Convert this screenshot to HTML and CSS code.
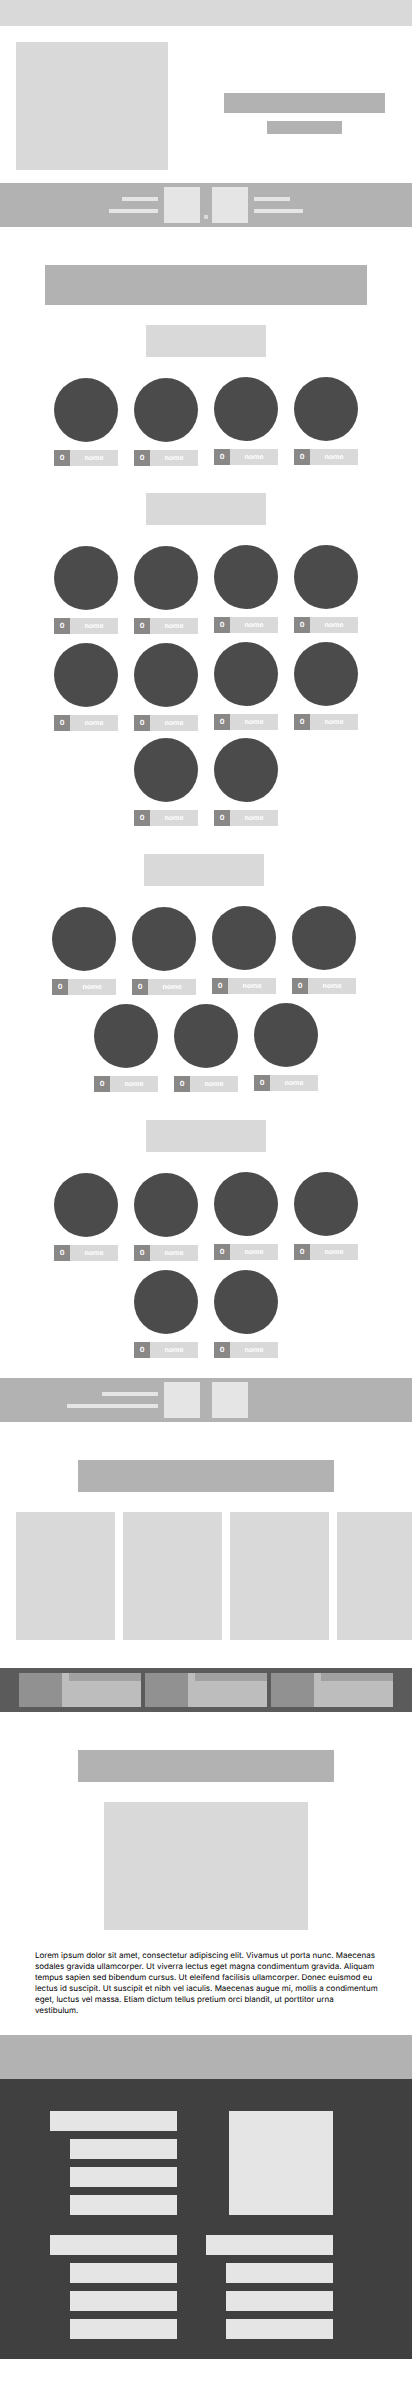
FILE: index.html
```html
<!DOCTYPE html>
<html lang="pt">
<head>
<meta charset="utf-8">
<meta name="viewport" content="width=device-width, initial-scale=1">
<title>Wireframe</title>
<link rel="stylesheet" href="styles.css">
</head>
<body>
<header class="topbar"></header>
<main>
  <section class="hero">
    <div class="hero-image"></div>
    <div class="hero-copy">
      <div class="hero-title"></div>
      <div class="hero-subtitle"></div>
    </div>
  </section>

  <section class="band match">
    <div class="lines lines-end"><i class="line line-s"></i><i class="line line-m"></i></div>
    <div class="teams teams-score"><div class="crest"></div><i class="dot"></i><div class="crest"></div></div>
    <div class="lines"><i class="line line-s"></i><i class="line line-m"></i></div>
  </section>

  <section class="squad">
    <div class="title title-wide"></div>
    <div class="group group-first">
      <div class="group-title"></div>
      <div class="row">
        <div class="player"><div class="photo"></div><div class="tag"><b>0</b><span>nome</span></div></div>
        <div class="player"><div class="photo"></div><div class="tag"><b>0</b><span>nome</span></div></div>
        <div class="player"><div class="photo"></div><div class="tag"><b>0</b><span>nome</span></div></div>
        <div class="player"><div class="photo"></div><div class="tag"><b>0</b><span>nome</span></div></div>
      </div>
    </div>
    <div class="group">
      <div class="group-title"></div>
      <div class="row">
        <div class="player"><div class="photo"></div><div class="tag"><b>0</b><span>nome</span></div></div>
        <div class="player"><div class="photo"></div><div class="tag"><b>0</b><span>nome</span></div></div>
        <div class="player"><div class="photo"></div><div class="tag"><b>0</b><span>nome</span></div></div>
        <div class="player"><div class="photo"></div><div class="tag"><b>0</b><span>nome</span></div></div>
      </div>
      <div class="row">
        <div class="player"><div class="photo"></div><div class="tag"><b>0</b><span>nome</span></div></div>
        <div class="player"><div class="photo"></div><div class="tag"><b>0</b><span>nome</span></div></div>
        <div class="player"><div class="photo"></div><div class="tag"><b>0</b><span>nome</span></div></div>
        <div class="player"><div class="photo"></div><div class="tag"><b>0</b><span>nome</span></div></div>
      </div>
      <div class="row row-tight">
        <div class="player"><div class="photo"></div><div class="tag"><b>0</b><span>nome</span></div></div>
        <div class="player"><div class="photo"></div><div class="tag"><b>0</b><span>nome</span></div></div>
      </div>
    </div>
    <div class="group">
      <div class="shift">
        <div class="group-title"></div>
        <div class="row">
          <div class="player"><div class="photo"></div><div class="tag"><b>0</b><span>nome</span></div></div>
          <div class="player"><div class="photo"></div><div class="tag"><b>0</b><span>nome</span></div></div>
          <div class="player"><div class="photo"></div><div class="tag"><b>0</b><span>nome</span></div></div>
          <div class="player"><div class="photo"></div><div class="tag"><b>0</b><span>nome</span></div></div>
        </div>
      </div>
      <div class="row">
        <div class="player"><div class="photo"></div><div class="tag"><b>0</b><span>nome</span></div></div>
        <div class="player"><div class="photo"></div><div class="tag"><b>0</b><span>nome</span></div></div>
        <div class="player"><div class="photo"></div><div class="tag"><b>0</b><span>nome</span></div></div>
      </div>
    </div>
    <div class="group">
      <div class="group-title"></div>
      <div class="row">
        <div class="player"><div class="photo"></div><div class="tag"><b>0</b><span>nome</span></div></div>
        <div class="player"><div class="photo"></div><div class="tag"><b>0</b><span>nome</span></div></div>
        <div class="player"><div class="photo"></div><div class="tag"><b>0</b><span>nome</span></div></div>
        <div class="player"><div class="photo"></div><div class="tag"><b>0</b><span>nome</span></div></div>
      </div>
      <div class="row">
        <div class="player"><div class="photo"></div><div class="tag"><b>0</b><span>nome</span></div></div>
        <div class="player"><div class="photo"></div><div class="tag"><b>0</b><span>nome</span></div></div>
      </div>
    </div>
  </section>

  <section class="band match">
    <div class="lines lines-end"><i class="line line-l"></i><i class="line line-xl"></i></div>
    <div class="teams"><div class="crest"></div><div class="crest"></div></div>
  </section>

  <section class="gallery">
    <div class="title"></div>
    <div class="cards">
      <div class="card"></div><div class="card"></div><div class="card"></div><div class="card"></div>
    </div>
  </section>

  <section class="band news">
    <div class="news-item"><div class="news-thumb"></div><div class="news-body"><div class="news-strip"></div></div></div>
    <div class="news-item"><div class="news-thumb"></div><div class="news-body"><div class="news-strip"></div></div></div>
    <div class="news-item"><div class="news-thumb"></div><div class="news-body"><div class="news-strip"></div></div></div>
  </section>

  <section class="about">
    <div class="title"></div>
    <div class="about-image"></div>
    <p>Lorem ipsum dolor sit amet, consectetur adipiscing elit. Vivamus ut porta nunc. Maecenas sodales gravida ullamcorper. Ut viverra lectus eget magna condimentum gravida. Aliquam tempus sapien sed bibendum cursus. Ut eleifend facilisis ullamcorper. Donec euismod eu lectus id suscipit. Ut suscipit et nibh vel iaculis. Maecenas augue mi, mollis a condimentum eget, luctus vel massa. Etiam dictum tellus pretium orci blandit, ut porttitor urna vestibulum.</p>
  </section>
  <div class="band"></div>
</main>
<footer class="footer">
  <div class="links"><i></i><i></i><i></i><i></i></div>
  <div class="footer-logo"></div>
  <div class="links"><i></i><i></i><i></i><i></i></div>
  <div class="links"><i></i><i></i><i></i><i></i></div>
</footer>
</body>
</html>
```
FILE: styles.css
```css
* { box-sizing: border-box; }

body {
  margin: 0;
  padding-bottom: 44px;
  background: #fff;
  color: #000;
  font-family: Inter, "Liberation Sans", sans-serif;
  text-rendering: geometricPrecision;
  overflow-x: hidden;
}

.topbar { height: 26px; background: #d9d9d9; }

/* Hero */
.hero {
  display: flex;
  justify-content: space-between;
  padding: 16px 27px 13px 16px;
}
.hero-image { width: 152px; height: 128px; background: #d9d9d9; }
.hero-copy {
  display: flex;
  flex-direction: column;
  align-items: center;
  gap: 8px;
  padding-top: 51px;
}
.hero-title { width: 161px; height: 20px; background: #b2b2b2; }
.hero-subtitle { width: 75px; height: 13px; background: #b2b2b2; }

/* Full-width bands */
.band { height: 44px; background: #b2b2b2; }
.match {
  display: grid;
  grid-template-columns: 1fr auto 1fr;
  column-gap: 6px;
  align-items: center;
}
.lines { display: flex; flex-direction: column; gap: 8px; }
.lines-end { align-items: flex-end; }
.line { height: 4px; background: #e5e5e5; }
.line-s { width: 36px; }
.line-m { width: 49px; }
.line-l { width: 56px; }
.line-xl { width: 91px; }
.teams {
  display: grid;
  grid-template-columns: 36px 36px;
  column-gap: 12px;
}
.teams-score {
  grid-template-columns: 36px 4px 36px;
  column-gap: 4px;
}
.crest { height: 36px; background: #e5e5e5; }
.dot { height: 4px; margin-bottom: 4px; align-self: end; background: #d9d9d9; }

/* Section titles */
.title { width: 256px; height: 32px; margin: 0 auto 20px; background: #b2b2b2; }
.title-wide { width: 322px; height: 40px; }

/* Squad */
.squad { padding: 38px 0 20px; }
.group { margin-bottom: 28px; }
.group-first { margin-bottom: 27px; }
.group:last-child { margin-bottom: 0; }
.group-title { width: 120px; height: 32px; margin: 0 auto 20px; background: #d9d9d9; }
.shift { padding-right: 4px; margin-bottom: 8px; }
.row { display: flex; justify-content: center; gap: 16px; }
.row + .row { margin-top: 8px; }
.row + .row-tight { margin-top: 6px; }
.player { width: 64px; }
.player:nth-child(-n+2) { margin-top: 1px; }
.photo { height: 64px; margin-bottom: 8px; border-radius: 50%; background: #4b4b4b; }
.tag {
  display: grid;
  grid-template-columns: 16px 1fr;
  background: #d9d9d9;
  color: #fff;
  font-size: 7px;
  font-weight: 700;
  line-height: 16px;
  text-align: center;
}
.tag b { background: #8a8787; font-weight: inherit; }

/* Gallery */
.gallery { padding: 38px 0 28px; }
.cards { display: flex; gap: 8px; padding-left: 16px; overflow: hidden; }
.card { flex: 0 0 99px; height: 128px; background: #d9d9d9; }

/* News */
.news {
  display: flex;
  justify-content: center;
  gap: 4px;
  padding: 5px 0;
  background: #5b5b5b;
}
.news-item { display: flex; width: 122px; }
.news-thumb { width: 43px; background: #919191; }
.news-body { flex: 1; padding-left: 7px; background: #bdbdbd; }
.news-strip { height: 8px; background: #a1a1a1; }

/* About */
.about { padding: 38px 0 19px; }
.about-image { width: 204px; height: 128px; margin: 0 auto 20px; background: #d9d9d9; }
.about p { margin: 0; padding: 0 34px 0 35px; font-size: 8px; line-height: 11px; }

/* Footer */
.footer {
  display: grid;
  grid-template-columns: 127px 127px;
  justify-content: center;
  gap: 20px 29px;
  padding: 32px 79px 20px 50px;
  background: #404040;
}
.links { display: flex; flex-direction: column; gap: 8px; }
.links i { height: 20px; margin-left: 20px; background: #e5e5e5; }
.links i:first-child { margin-left: 0; }
.footer-logo { width: 104px; height: 104px; justify-self: end; background: #e5e5e5; }
```
